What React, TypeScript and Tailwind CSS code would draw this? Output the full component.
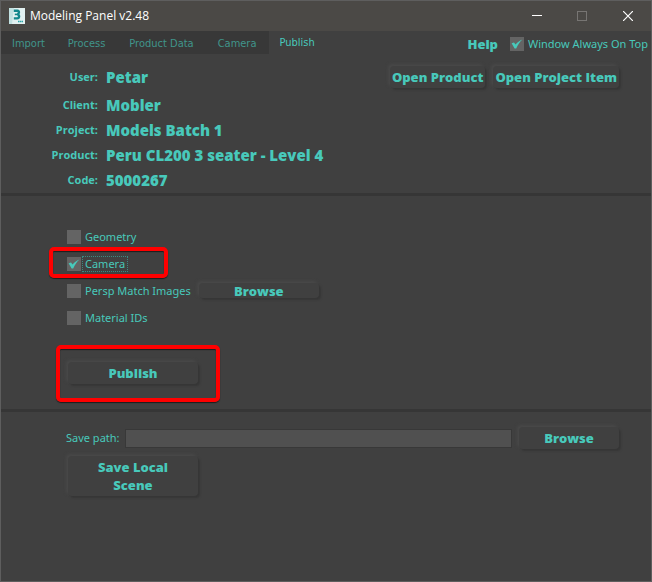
import type { ReactNode } from "react";

const tabs = ["Import", "Process", "Product Data", "Camera", "Publish"];

const details = [
  { label: "User:", value: "Petar" },
  { label: "Client:", value: "Mobler" },
  { label: "Project:", value: "Models Batch 1" },
  { label: "Product:", value: "Peru CL200 3 seater - Level 4" },
  { label: "Code:", value: "5000267" },
];

function SoftButton({ className, children }: { className: string; children: ReactNode }) {
  return (
    <button
      type="button"
      className={`flex items-center justify-center rounded-[4px] bg-[#404040] text-center text-[13px] leading-[18px] font-extrabold shadow-[2px_2px_2px_#363636,-2px_-2px_3px_#484848] ${className}`}
    >
      {children}
    </button>
  );
}

function CheckOption({
  id,
  label,
  checked = false,
  focused = false,
}: {
  id: string;
  label: string;
  checked?: boolean;
  focused?: boolean;
}) {
  return (
    <div className="flex items-center">
      <span className="grid size-[14px] shrink-0">
        <input
          id={id}
          type="checkbox"
          defaultChecked={checked}
          className="peer col-start-1 row-start-1 size-[14px] appearance-none bg-[#646464] outline-none"
        />
        <svg
          viewBox="0 0 14 14"
          className="pointer-events-none invisible col-start-1 row-start-1 size-[14px] peer-checked:visible"
        >
          <path d="M1.6 6.2 L4 5.4 L5.6 7.6 C7.2 5.4 9.4 3.8 12.4 2.6 C9.8 5 8 7.6 6.2 11.4 L4.6 11.4 Z" fill="#48c9bb" />
        </svg>
      </span>
      <label
        htmlFor={id}
        className={`ml-px border border-dotted px-[2px] font-['Noto_Sans',sans-serif] text-[11px] leading-[14px] whitespace-nowrap ${
          focused ? "border-[#3b8a82]" : "border-transparent"
        }`}
      >
        {label}
      </label>
    </div>
  );
}

function Highlight({ className }: { className: string }) {
  return (
    <div
      className={`pointer-events-none absolute rounded-[5px] border-4 border-[#ff0000] shadow-[0_1px_1px_#1c1c1c,inset_0_1px_1px_#1c1c1c] ${className}`}
    />
  );
}

function AppIcon() {
  return (
    <svg viewBox="0 0 16 16" className="size-4" aria-hidden="true">
      <rect width="16" height="16" fill="#e2f1f1" />
      <path d="M0 0H5L3 16H0Z" fill="#c2e2e2" />
      <path d="M4.8 2.8H8.6C10.4 2.8 10.4 5.8 8.4 6.3C10.8 6.8 10.6 10.4 8.2 10.4H4.8" fill="none" stroke="#12878c" strokeWidth="2.4" />
      <path d="M5.8 6.4H9" stroke="#12878c" strokeWidth="1.6" />
      <path d="M9 13.5H14" stroke="#2ba5a8" strokeWidth="1.4" strokeDasharray="1.4 .4" />
    </svg>
  );
}

function TitleBar() {
  return (
    <header className="flex h-[30px] items-center bg-[#4b4946] pl-2 text-white">
      <AppIcon />
      <h1 className="ml-[5px] text-[12px] leading-4">Modeling Panel v2.48</h1>
      <div className="ml-auto flex">
        <button type="button" aria-label="Minimize" className="flex h-7 w-[45px] items-center justify-center">
          <svg viewBox="0 0 10 10" className="size-[10px]" shapeRendering="crispEdges">
            <path d="M0 4.5H10" stroke="#fff" />
          </svg>
        </button>
        <button type="button" aria-label="Maximize" disabled className="flex h-7 w-[45px] items-center justify-center">
          <svg viewBox="0 0 10 10" className="size-[10px]" shapeRendering="crispEdges">
            <path d="M.5 .5H9.5V9.5H.5Z" fill="none" stroke="#777573" />
          </svg>
        </button>
        <button type="button" aria-label="Close" className="flex h-7 w-[47px] items-center justify-center">
          <svg viewBox="0 0 10 10" className="size-[10px]">
            <path d="M0 0L10 10M10 0L0 10" stroke="#fff" strokeWidth="1.2" />
          </svg>
        </button>
      </div>
    </header>
  );
}

function MenuBar() {
  return (
    <div className="flex h-[23px]">
      <nav role="tablist" className="flex font-['DejaVu_Sans_Condensed','DejaVu_Sans',sans-serif] text-[11px] leading-4">
        {tabs.map((tab) => {
          const active = tab === "Publish";
          return (
            <button
              key={tab}
              type="button"
              role="tab"
              aria-selected={active}
              className={
                active
                  ? "px-[11px] text-[#48c9bb]"
                  : "bg-[#383838] px-3 pt-[3px] text-[#40958b] first:px-[11px]"
              }
            >
              {tab}
            </button>
          );
        })}
      </nav>
      <div className="ml-auto flex items-center gap-3 pt-[3px]">
        <a href="#help" className="text-[13px] leading-[18px] font-extrabold">
          Help
        </a>
        <CheckOption id="on-top" label="Window Always On Top" checked />
      </div>
    </div>
  );
}

export default function App() {
  return (
    <div className="flex min-h-screen flex-col border border-[#5e5e5e] bg-[#404040] font-['Open_Sans',sans-serif] text-[#48c9bb]">
      <TitleBar />
      <MenuBar />
      <main>
        <section className="flex items-start justify-between border-b-[3px] border-[#363636] pt-[11px] pr-8">
          <dl>
            {details.map(({ label, value }) => (
              <div key={label} className="flex h-[25px] items-center gap-2 first:mb-[3px]">
                <dt className="w-[97px] text-right text-[11px] font-bold">{label}</dt>
                <dd className="text-[15px] font-extrabold">{value}</dd>
              </div>
            ))}
          </dl>
          <div className="flex gap-2 pt-px">
            <SoftButton className="h-[22px] px-[2px]">Open Product</SoftButton>
            <SoftButton className="h-[22px] px-[2px]">Open Project Item</SoftButton>
          </div>
        </section>

        <section className="border-b-[3px] border-[#363636] pt-[27px] pb-[25px] pl-[66px]">
          <div className="flex h-[27px] items-center">
            <CheckOption id="geometry" label="Geometry" />
          </div>
          <div className="relative flex h-[27px] items-center">
            <CheckOption id="camera" label="Camera" checked focused />
            <Highlight className="-top-[3px] -left-[18px] h-[31px] w-[119px]" />
          </div>
          <div className="flex h-[27px] items-center gap-[5px]">
            <CheckOption id="persp" label="Persp Match Images" />
            <SoftButton className="h-[15px] w-[120px]">Browse</SoftButton>
          </div>
          <div className="flex h-[27px] items-center">
            <CheckOption id="material" label="Material IDs" />
          </div>
          <div className="relative mt-[31px] flex pl-px">
            <SoftButton className="h-[22px] w-[130px]">Publish</SoftButton>
            <Highlight className="-top-[17px] -left-[11px] h-[57px] w-[164px]" />
          </div>
        </section>

        <section className="pt-[15px] pr-8 pl-[65px]">
          <div className="flex items-center">
            <label htmlFor="save-path" className="font-['Noto_Sans',sans-serif] text-[11px]">
              Save path:
            </label>
            <input
              id="save-path"
              type="text"
              className="ml-[5px] h-[19px] min-w-0 flex-1 border border-[#383838] bg-[#505050] px-1 text-[11px] outline-none"
            />
            <SoftButton className="ml-[7px] h-[22px] w-[100px]">Browse</SoftButton>
          </div>
          <div className="mt-[7px] flex pl-[2px]">
            <SoftButton className="h-10 w-[130px] px-6">Save Local Scene</SoftButton>
          </div>
        </section>
      </main>
    </div>
  );
}
